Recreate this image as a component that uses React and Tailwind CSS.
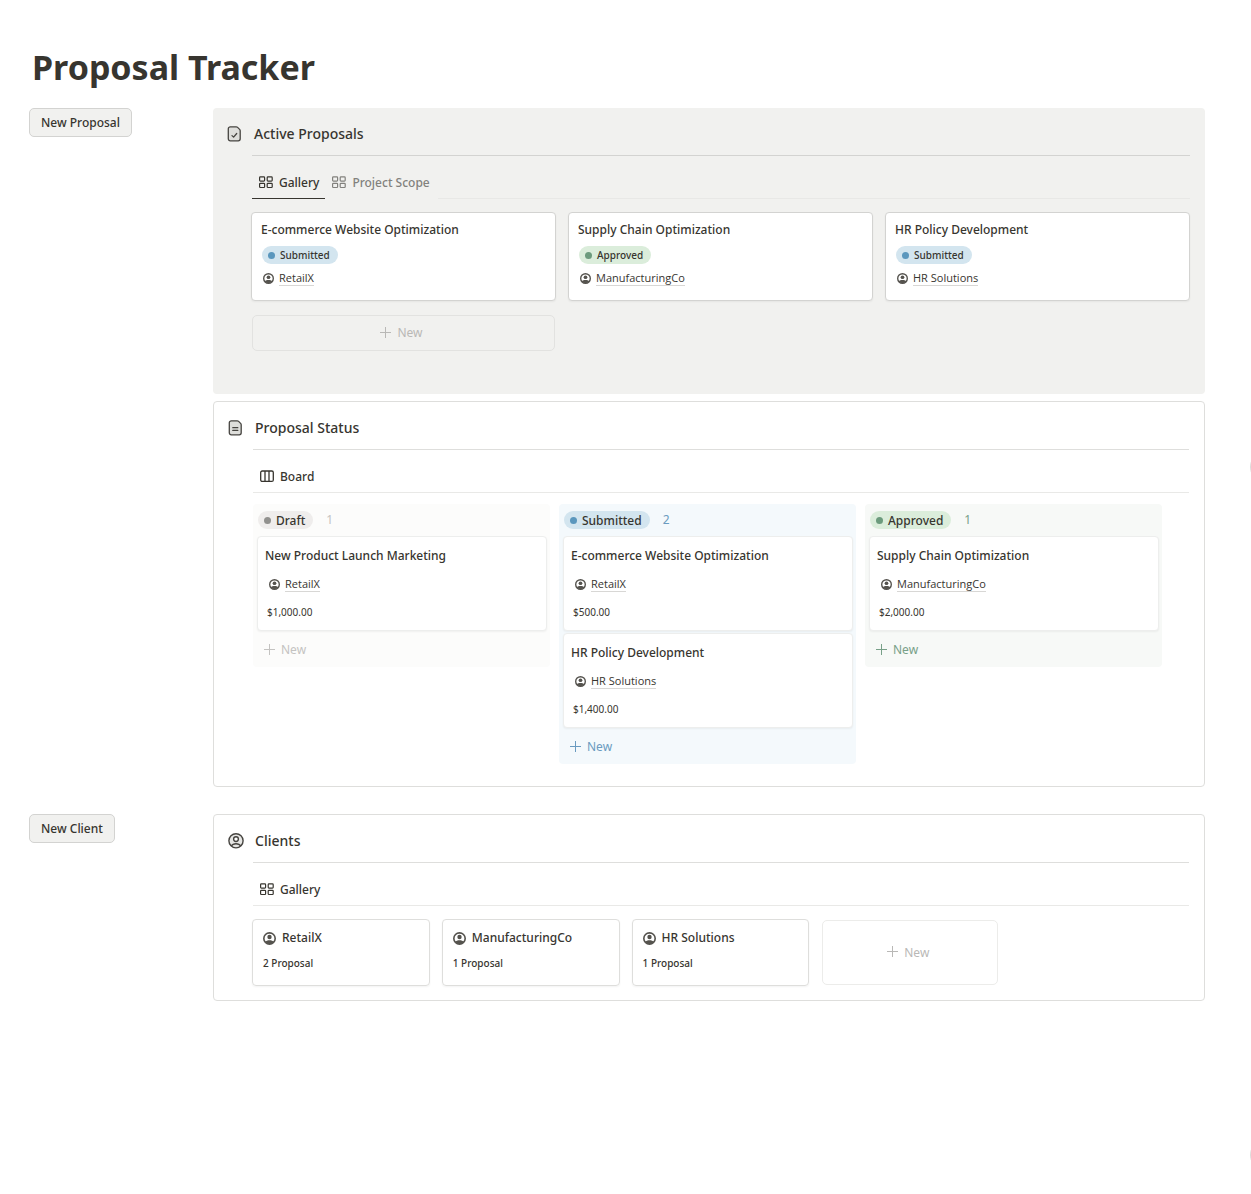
import { useState } from "react";

const proposals = [
  { name: "E-commerce Website Optimization", status: "Submitted", client: "RetailX" },
  { name: "Supply Chain Optimization", status: "Approved", client: "ManufacturingCo" },
  { name: "HR Policy Development", status: "Submitted", client: "HR Solutions" },
];

const board = [
  {
    status: "Draft",
    bg: "bg-[#fcfcfb]",
    muted: "text-[#c4c3c1]",
    cards: [{ name: "New Product Launch Marketing", client: "RetailX", price: "$1,000.00" }],
  },
  {
    status: "Submitted",
    bg: "bg-[#f4f9fc]",
    muted: "text-[#6a9bc0]",
    cards: [
      { name: "E-commerce Website Optimization", client: "RetailX", price: "$500.00" },
      { name: "HR Policy Development", client: "HR Solutions", price: "$1,400.00" },
    ],
  },
  {
    status: "Approved",
    bg: "bg-[#f7f9f7]",
    muted: "text-[#78a088]",
    cards: [{ name: "Supply Chain Optimization", client: "ManufacturingCo", price: "$2,000.00" }],
  },
];

const clients = [
  { name: "RetailX", count: "2 Proposal" },
  { name: "ManufacturingCo", count: "1 Proposal" },
  { name: "HR Solutions", count: "1 Proposal" },
];

const pillColors = {
  Draft: "bg-[#efedec]",
  Submitted: "bg-[#d3e5ef]",
  Approved: "bg-[#dbeddb]",
};

const dotColors = {
  Draft: "bg-[#91918e]",
  Submitted: "bg-[#5b97bd]",
  Approved: "bg-[#6c9b7d]",
};

/* ================= ICONS ================= */

function FileIcon({ checked }) {
  return (
    <svg className="size-4 shrink-0" viewBox="0 0 16 16" fill="none" stroke="#464440" strokeWidth="1.3" strokeLinecap="round" strokeLinejoin="round">
      <path d="M3.3.8h5.9a2 2 0 0 1 1.400.6l2 2a2 2 0 0 1 .6 1.400v8a2 2 0 0 1-2 2H3.300a2 2 0 0 1-2-2v-10a2 2 0 0 1 2-2z" fill="#dededb" />
      {checked ? <path d="M5 9.600l1.600 1.500 3.100-3.600" /> : <path d="M4.800 7.700h5M4.800 10.400h5" />}
    </svg>
  );
}

function PersonOutlineIcon() {
  return (
    <svg className="size-4 shrink-0" viewBox="0 0 16 16" fill="none" stroke="#464440" strokeWidth="1.4">
      <circle cx="8" cy="7.800" r="7.100" fill="#e6e6e4" />
      <circle cx="8" cy="6.100" r="2.400" fill="#fff" />
      <path d="M3.300 13C4.300 11.300 6 10.700 8 10.700s3.700.6 4.700 2.300" />
    </svg>
  );
}

function PersonIcon({ className }) {
  return (
    <svg className={className} viewBox="0 0 16 16" fill="#55534e">
      <circle cx="8" cy="8" r="7" fill="none" stroke="#55534e" strokeWidth="2" />
      <circle cx="8" cy="6.200" r="2.700" />
      <path d="M2.300 12C3.800 10.600 5.800 10 8 10s4.200.6 5.700 2A7 7 0 0 1 8 15a7 7 0 0 1-5.700-3z" />
    </svg>
  );
}

function GalleryIcon() {
  return (
    <svg className="w-[14px] h-[14px] shrink-0" viewBox="0 0 14 14" fill="none" stroke="currentColor" strokeWidth="1.2">
      <rect x=".6" y=".9" width="5" height="4.200" rx=".8" />
      <rect x="8.200" y=".9" width="5" height="4.200" rx=".8" />
      <rect x=".6" y="7.300" width="5" height="4.200" rx=".8" />
      <rect x="8.200" y="7.300" width="5" height="4.200" rx=".8" />
    </svg>
  );
}

function BoardIcon() {
  return (
    <svg className="w-[14px] h-[14px] shrink-0" viewBox="0 0 14 14" fill="none" stroke="currentColor" strokeWidth="1.300">
      <rect x=".7" y="1" width="12.600" height="10.400" rx="1.500" />
      <path d="M5 1v10.400M9 1v10.400" />
    </svg>
  );
}

function PlusIcon() {
  return (
    <svg className="w-[11px] h-[11px] mb-[2px] shrink-0" viewBox="0 0 11 11" fill="none" stroke="currentColor">
      <path d="M5.500 0v11M0 5.500h11" />
    </svg>
  );
}

/* ================= PARTS ================= */

function Panel({ icon, title, className, children }) {
  return (
    <section className={`rounded ${className}`}>
      <div className="flex items-center gap-[11px] h-[47px] pt-1">
        {icon}
        <h2 className="text-[14px] leading-5 font-medium">{title}</h2>
      </div>
      <div className="pl-6">{children}</div>
    </section>
  );
}

function Tab({ icon, label, active, underline, onClick }) {
  return (
    <button
      onClick={onClick}
      className={`flex items-center gap-[6px] h-[34px] pt-[2px] pl-[7px] pr-[6px] -mb-px text-[12px] leading-5 font-medium border-b ${
        active ? "text-[#37352f]" : "text-[#82817d]"
      } ${underline ? "border-[#37352f]" : "border-transparent"}`}
    >
      {icon}
      {label}
    </button>
  );
}

function Pill({ status, large }) {
  return (
    <span
      className={`inline-flex items-center gap-[5px] h-[18px] rounded-full pl-[6px] pr-2 font-medium ${pillColors[status]} ${
        large ? "text-[12px] pt-px" : "text-[10px]"
      }`}
    >
      <span className={`size-[7px] rounded-full ${dotColors[status]}`}></span>
      {status}
    </span>
  );
}

function ClientLink({ name }) {
  return (
    <a href="#" className="flex items-center gap-[5px] font-['Open_Sans',sans-serif] text-[11px] leading-[14px]">
      <PersonIcon className="size-[11px] shrink-0" />
      <span className="border-b border-[#d8d7d5]">{name}</span>
    </a>
  );
}

function ActionButton({ children }) {
  return (
    <button className="h-[29px] px-[11px] pt-px text-[12px] font-medium rounded-[5px] border border-[#d3d3d1] bg-[#f1f1ef]">
      {children}
    </button>
  );
}

export default function App() {
  const [tab, setTab] = useState("Gallery");

  return (
    <div className="min-h-screen bg-white text-[#37352f] font-['Noto_Sans',sans-serif] pl-[29px] pr-[46px] pt-[43px] pb-24">
      <h1 className="text-[34px] leading-[48px] font-bold pl-[3px]">Proposal Tracker</h1>

      <div className="grid grid-cols-[184px_minmax(0,1fr)] gap-y-[27px] items-start mt-[17px]">
        <div>
          <ActionButton>New Proposal</ActionButton>
        </div>

        <div className="flex flex-col gap-[7px]">
          {/* Active Proposals */}
          <Panel
            icon={<FileIcon checked />}
            title="Active Proposals"
            className="bg-[#f1f1ef] pl-[14px] pr-[15px] pb-[43px]"
          >
            <div className="ml-px border-t border-[#d3d3d1] pt-[9px]">
              <div className="flex">
                <Tab icon={<GalleryIcon />} label="Gallery" active={tab === "Gallery"} underline={tab === "Gallery"} onClick={() => setTab("Gallery")} />
                <Tab icon={<GalleryIcon />} label="Project Scope" active={tab === "Project Scope"} underline={tab === "Project Scope"} onClick={() => setTab("Project Scope")} />
                <div className="flex-1 ml-[2px] border-b border-[#e8e8e6] -mb-px"></div>
              </div>
            </div>
            <div className="grid grid-cols-3 gap-x-3 gap-y-[14px] mt-[14px]">
              {proposals.map((p) => (
                <article key={p.name} className="h-[89px] bg-white rounded border border-[#d3d3d1] shadow-xs px-[9px] pt-[7px]">
                  <h3 className="text-[12px] leading-5 font-medium">{p.name}</h3>
                  <div className="flex mt-[6px] pl-px">
                    <Pill status={p.status} />
                  </div>
                  <div className="mt-[7px] pl-[2px]">
                    <ClientLink name={p.client} />
                  </div>
                </article>
              ))}
              <button className="flex items-center justify-center gap-[6px] h-9 mx-px pr-1 rounded-[5px] border border-[#e2e2e0] text-[12px] text-[#b9b8b6]">
                <PlusIcon />
                New
              </button>
            </div>
          </Panel>

          {/* Proposal Status */}
          <Panel
            icon={<FileIcon />}
            title="Proposal Status"
            className="border border-[#dededc] pl-[14px] pr-[15px] pb-[22px]"
          >
            <div className="ml-px border-y border-t-[#dededc] border-b-[#e9e9e7] h-11 pt-[9px]">
              <Tab icon={<BoardIcon />} label="Board" active />
            </div>
            <div className="grid grid-cols-3 gap-[9px] items-start mt-[11px] ml-px mr-[27px]">
              {board.map((col) => (
                <div key={col.status} className={`rounded pl-1 pr-[3px] pt-[7px] pb-[7px] ${col.bg}`}>
                  <div className="flex items-center gap-[13px] pl-px">
                    <Pill status={col.status} large />
                    <span className={`text-[12px] leading-[18px] ${col.muted}`}>{col.cards.length}</span>
                  </div>
                  <div className="flex flex-col gap-[2px] mt-[7px]">
                    {col.cards.map((c) => (
                      <article key={c.name} className="h-[95px] bg-white rounded border border-[#edeeed] shadow-xs px-[7px] pt-[9px]">
                        <h3 className="text-[12px] leading-5 font-medium">{c.name}</h3>
                        <div className="mt-[11px] pl-1">
                          <ClientLink name={c.client} />
                        </div>
                        <p className="mt-3 pl-[2px] text-[10px] leading-4">{c.price}</p>
                      </article>
                    ))}
                  </div>
                  <button className={`flex items-center gap-[6px] h-5 mt-[9px] ml-[7px] text-[12px] ${col.muted}`}>
                    <PlusIcon />
                    New
                  </button>
                </div>
              ))}
            </div>
          </Panel>
        </div>

        <div>
          <ActionButton>New Client</ActionButton>
        </div>

        {/* Clients */}
        <Panel
          icon={<PersonOutlineIcon />}
          title="Clients"
          className="border border-[#dededc] pl-[14px] pr-[15px] pb-[14px]"
        >
          <div className="ml-px border-y border-t-[#dededc] border-b-[#e9e9e7] h-11 pt-[9px]">
            <Tab icon={<GalleryIcon />} label="Gallery" active />
          </div>
          <div className="grid grid-cols-5 gap-3 mt-[13px]">
            {clients.map((c) => (
              <article key={c.name} className="h-[67px] rounded border border-[#dededc] shadow-xs px-[10px] pt-2">
                <h3 className="flex items-center gap-[6px] text-[12px] leading-5 font-medium">
                  <PersonIcon className="size-[13px] shrink-0" />
                  {c.name}
                </h3>
                <p className="mt-[7px] text-[10px] leading-4 font-medium">{c.count}</p>
              </article>
            ))}
            <button className="flex items-center justify-center gap-[6px] m-px pr-1 rounded-[5px] border border-[#ececea] text-[12px] text-[#b9b8b6]">
              <PlusIcon />
              New
            </button>
          </div>
        </Panel>
      </div>

      {/* Floating buttons, tucked behind the window edge */}
      <button aria-label="Comments" className="fixed top-[449px] -right-[35px] size-9 rounded-full bg-white border border-[#dcdcda]"></button>
      <button aria-label="Help" className="fixed bottom-[21px] -right-[35px] size-9 rounded-full bg-white border border-[#dcdcda]"></button>
    </div>
  );
}
